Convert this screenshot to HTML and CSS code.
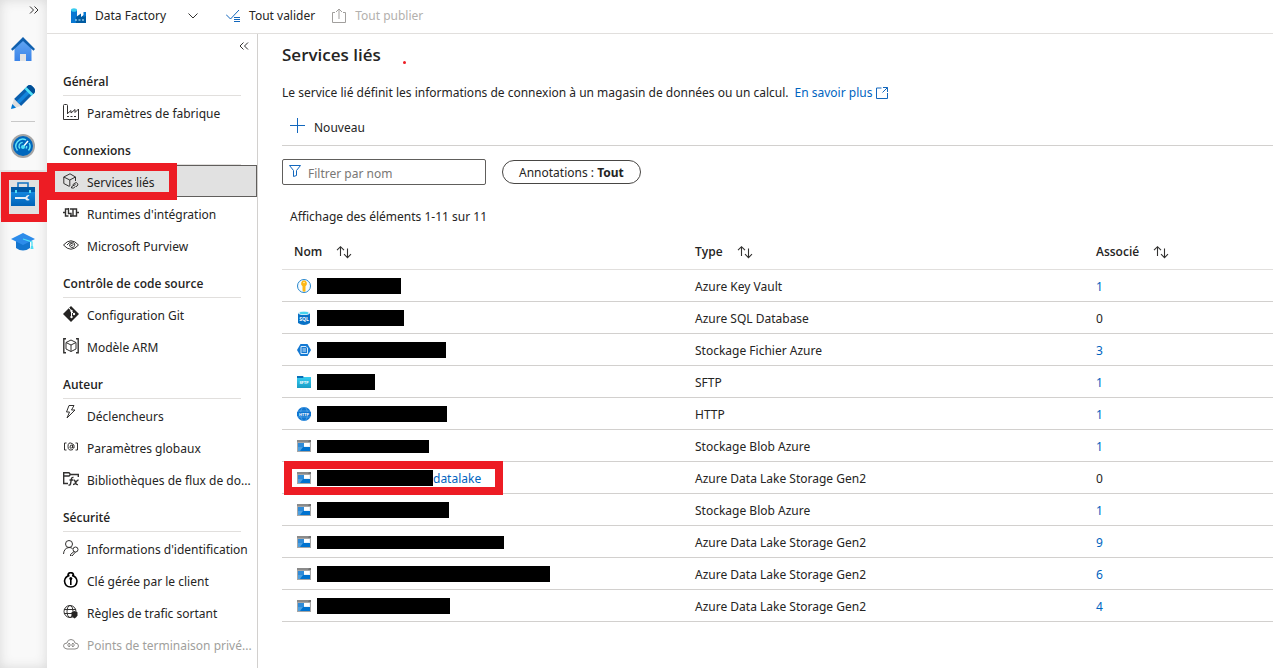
FILE: index.html
```html
<!DOCTYPE html>
<html lang="fr">
<head>
<meta charset="utf-8">
<meta name="viewport" content="width=device-width, initial-scale=1">
<title>Data Factory - Services liés</title>
<link rel="stylesheet" href="styles.css">
</head>
<body>
<svg class="sprite" aria-hidden="true">
  <defs>
    <linearGradient id="blue" x1="0" y1="0" x2="0" y2="1"><stop offset="0" stop-color="#1a93ea"/><stop offset="1" stop-color="#0063b8"/></linearGradient>
    <linearGradient id="sky" x1="0" y1="0" x2="0" y2="1"><stop offset="0" stop-color="#62a6f2"/><stop offset="1" stop-color="#3a83e8"/></linearGradient>
    <linearGradient id="folder" x1="0" y1="0" x2="0" y2="1"><stop offset="0" stop-color="#35cdf2"/><stop offset="1" stop-color="#1a9cc4"/></linearGradient>
  </defs>
  <symbol id="storage" viewBox="0 0 14 12">
    <path fill="#a6a6a6" d="M0 0h14v12H0z"/><path fill="#8a8a8a" d="M0 0h14v2H0z"/><path fill="#737373" d="M12 0h2v2h-3z"/>
    <path fill="#e8f1fa" d="M1 3h12v8H1z"/><path fill="#2f8bd8" d="M1 3h6v4H1z"/><path fill="#0072cf" d="M1 7h12v4H1z"/>
    <path fill="#fff" d="M7 3h5v3H7z"/><path fill="#4da0e0" d="M1 7h5L3 11H1z"/>
  </symbol>
  <symbol id="sort" viewBox="0 0 16 14">
    <path fill="none" stroke="#323130" stroke-width="1.1" d="M4.500 11V2M1 5.200 4.500 1.700 8 5.200M11.500 3.500v9M8 9.200l3.500 3.500L15 9.200"/>
  </symbol>
</svg>
<div class="app">
  <nav class="rail" aria-label="Navigation principale">
    <button class="rail-toggle" aria-label="Développer"><svg width="10" height="8" viewBox="0 0 10 8"><path class="line" d="m1 .5 3.500 3.500L1 7.500M5.500.5 9 4 5.500 7.500"/></svg></button>
    <a class="rail-item" href="#" aria-label="Accueil"><svg width="24" height="24" viewBox="0 0 24 24"><path fill="url(#sky)" d="M3.500 11 12 3l8.500 8v13H15v-7H9v7H3.500z"/><path fill="#e3e3e3" d="M9 17h6v7H9z"/><path fill="#0f5fae" d="M12 0 24 12l-1.500 1.800L12 4 1.500 13.800 0 12z"/></svg></a>
    <a class="rail-item" href="#" aria-label="Auteur"><svg width="24" height="24" viewBox="0 0 24 24"><path fill="#0a5fae" d="M3 14 16 1.500q2.500-2.500 5-.5l2 2q2 2.500 0 5L10 21z"/><path fill="#1283dc" d="M5.500 16.500 17 5l2.500 2.500L8 19z"/><path fill="#50e0f5" d="m13.500 4 2-2 7 7-2 2z"/><path fill="#004f96" d="m15.500 2 1-1q2.500-2 4.500 0l2 2q2 2.500.5 5l-1 1z"/><path fill="#dedede" d="m3 14 7 7-8 2.500L.500 22z"/><path fill="#0078d4" d="M1.300 19 5 22.700 0 24z"/></svg></a>
    <div class="rail-rule"></div>
    <a class="rail-item" href="#" aria-label="Surveiller"><svg width="24" height="24" viewBox="0 0 24 24"><circle cx="12" cy="12" r="12" fill="#a5a5a5"/><circle cx="12" cy="12" r="10" fill="#0067bd"/><g fill="none" stroke="#62e3f7" stroke-width="1.400"><path d="M6.500 16.500a7 7 0 0 1 8.500-10.700M18.200 9a7 7 0 0 1-.7 7.500M8.900 14.500a3.700 3.700 0 0 1 2.800-6.100M15.600 12a3.700 3.700 0 0 1-.5 2.500"/><path stroke="#fff" d="m12 13 5-6"/></g><circle cx="12" cy="13" r="2" fill="#50dff5"/></svg></a>
    <a class="rail-item selected marked" href="#" aria-label="Gérer" aria-current="page"><svg width="24" height="24" viewBox="0 0 24 24"><path fill="none" stroke="#1272c2" stroke-width="1.600" d="M7 5V1h10v4"/><path fill="url(#blue)" d="M0 5h24v19H0z"/><path fill="#0058a6" d="M0 5h24v5H0z"/><path fill="#50dff5" d="M4 8h2v3H4zM18 8h2v3h-2z"/><path fill="#e6eef5" d="M4 15h10.500q1-2 3-2l1 .2-2 2v1l2.300 1.800-1.800.6q-2 0-2.800-1.600H4z"/></svg></a>
    <a class="rail-item" href="#" aria-label="Formation"><svg width="24" height="20" viewBox="0 0 24 20"><path fill="#1476cf" d="M5 8h14v8q-7 5-14 0z"/><path fill="#2d8cea" d="M12 1 24 7l-12 6L0 7z"/><path fill="none" stroke="#50dff5" stroke-width="1.300" d="m12 7 9 3v5"/><path fill="#50dff5" d="M20 14h2l.5 3h-3z"/></svg></a>
  </nav>
  <div class="workspace">
    <header class="topbar">
      <button class="command factory"><svg width="16" height="15" viewBox="0 0 16 15"><path fill="#0878d2" d="M0 2h6v13H0z"/><path fill="#005ba1" d="M5 9 10 5.500V9l5-3.500V15H5z"/><path fill="#0878d2" d="M12.500 4H15v4l-2.500 1z"/><ellipse cx="3" cy="2" rx="3" ry="1.800" fill="#38cbee"/><path fill="#c8efff" d="M4 11.500h2v1H4zM7.500 11.500h2v1h-2zM11 11.500h2v1h-2z"/></svg><span>Data Factory</span><svg class="caret" width="10" height="6" viewBox="0 0 10 6"><path class="line" d="m.5.5 4.500 4.500L9.500.5"/></svg></button>
      <button class="command"><svg width="15" height="14" viewBox="0 0 15 14"><path class="line blue" d="m0 5.500 4.500 4.500L13 1M8 8.500h6M8 10.500h6M8 12.500h6"/></svg><span>Tout valider</span></button>
      <button class="command" disabled><svg width="16" height="16" viewBox="0 0 16 16"><path class="line" d="M4 4.500H1.500v10h13v-10H12M8 11V1M5 4l3-3 3 3"/></svg><span>Tout publier</span></button>
    </header>
    <div class="body">
      <nav class="sidebar" aria-label="Gérer">
        <button class="collapse" aria-label="Réduire"><svg width="10" height="8" viewBox="0 0 10 8"><path class="line" d="M4.500.5 1 4l3.500 3.500M9 .5 5.500 4 9 7.500"/></svg></button>
        <h2 class="group">Général</h2>
        <a class="link" href="#"><svg width="16" height="16" viewBox="0 0 16 16"><path class="line" d="M4.500 10V1.500q0-1-1-1h-2q-1 0-1 1v14h15V5l-3.500 3.500V5.500L8 9V6.500l-3.500 3"/><path fill="#323130" d="M4 12h2v1H4zM7.500 12h2v1h-2zM11 12h2v1h-2z"/></svg><span>Paramètres de fabrique</span></a>
        <h2 class="group">Connexions</h2>
        <a class="link active marked" href="#" aria-current="page"><svg width="16" height="16" viewBox="0 0 16 16"><path class="line" d="M6.500 13.500.800 10.500V4L7 .800 12.500 4v4M.8 4l6 3 5.700-3M6.800 7v6"/><path class="line" d="m9.500 12 2.500-2q1.500-1 2.500.5t-.5 2.500l-1 .700M12.500 11.500l-3 1.500q-1.500 1-1 2h2l2-1.500"/></svg><span>Services liés</span></a>
        <a class="link" href="#"><svg width="16" height="10" viewBox="0 0 16 10"><path class="line heavy" d="M0 4.500h2.500M5.500 1h-3v7h3M5.500 0v5.500H8V9M7 1h3v7H7M10.500 1h3v7h-3M13.500 4.500H16"/></svg><span>Runtimes d'intégration</span></a>
        <a class="link" href="#"><svg width="16" height="10" viewBox="0 0 16 10"><path class="line" d="M.5 5Q8-3.500 15.500 5 8 13.500.500 5z"/><path class="line" d="M4 5q4-5 7.500-1.500 1 4-3 4-3-1-1.500-3.500 3-1.500 3 .500-1 2-2 1"/></svg><span>Microsoft Purview</span></a>
        <h2 class="group">Contrôle de code source</h2>
        <a class="link" href="#"><svg width="16" height="16" viewBox="0 0 16 16"><path fill="#252423" d="m8 0 8 8-8 8-8-8z"/><path fill="none" stroke="#fff" d="m6 2 2.500 3v6M8.500 5.500 11 8"/><g fill="#fff"><circle cx="8.500" cy="5" r="1.200"/><circle cx="8.500" cy="11" r="1.200"/><circle cx="11" cy="8" r="1.200"/></g></svg><span>Configuration Git</span></a>
        <a class="link" href="#"><svg width="16" height="16" viewBox="0 0 16 16"><path class="line heavy" d="M3 .800H.800v14H3M13 .800h2.200v14H13"/><path class="line" d="m8 2 5 2.500v6.500L8 13.500 3 11V4.500zM3 4.500 8 7l5-2.500M8 7v6.500"/></svg><span>Modèle ARM</span></a>
        <h2 class="group">Auteur</h2>
        <a class="link" href="#"><svg class="raised" width="16" height="14" viewBox="0 0 16 14"><path class="line" d="M6 .500h5L8.500 5H12L4 13l2.500-6H3.500z"/></svg><span>Déclencheurs</span></a>
        <a class="link" href="#"><svg width="16" height="10" viewBox="0 0 16 10"><path class="line" d="M3.500 1H1.500v7h2M12.500 1h2v7h-2M10 7.500q-5 2-5-3t4-3q3 1 2 4.500H9.500V3Q7 2.500 7 5t2.500 0"/></svg><span>Paramètres globaux</span></a>
        <a class="link" href="#"><svg width="16" height="14" viewBox="0 0 16 14"><path class="line heavy" d="M5 11.500H.700V.800H6L7.500 2.500h7.800V5M.7 4H6l1.500-1.500"/><path class="line heavy" d="M10.500 5.500q-2-.5-2.200 2L7.500 12q-.5 1.500-2 1M6.500 8h3.500M10.500 8q1.500 0 2 2.500t2.500 2M15.500 8q-1.500 0-2.500 2.200T10 12.500"/></svg><span>Bibliothèques de flux de do...</span></a>
        <h2 class="group">Sécurité</h2>
        <a class="link" href="#"><svg width="16" height="16" viewBox="0 0 16 16"><circle class="line" cx="6" cy="4" r="3.500"/><path class="line" d="M.5 14q.5-6 5.500-6.500 2 0 3.500 1"/><circle class="line" cx="12.500" cy="9.500" r="2.500"/><path class="line" d="m11 11.500-3.500 3V16H9l3.500-4"/></svg><span>Informations d'identification</span></a>
        <a class="link" href="#"><svg width="16" height="16" viewBox="0 0 16 16"><path class="line strong" d="M5 4V3.500a2.700 2.700 0 0 1 5.500 0V4M6.500 3.500Q2 4.500 1.500 9q.5 6 6.300 6T14 9q-.5-4.500-5-5.500"/><circle cx="7.800" cy="6.500" r="1.500"/><path class="line strong" d="M7.800 7v6"/></svg><span>Clé gérée par le client</span></a>
        <a class="link" href="#"><svg width="16" height="14" viewBox="0 0 16 14"><g class="line"><circle cx="7" cy="6.500" r="6"/><ellipse cx="7" cy="6.500" rx="3" ry="6"/><path d="M1 4.500h12M1 8.500h9"/></g><path fill="#252423" d="m11.500 6 3 1.200v3q-.5 2-3 3.300-2.500-1.300-3-3.300v-3z"/></svg><span>Règles de trafic sortant</span></a>
        <a class="link disabled" aria-disabled="true"><svg width="16" height="11" viewBox="0 0 16 11"><path class="line" d="M4 10Q.5 9.500.5 6.800T4 4q.5-3.500 4-3.500T12 4q3.500 0 3.500 3T12 10z"/><path class="line" d="M7 4.500H5.500q-1.500 1.500 0 3H7M9 4.500h1.500q1.500 1.500 0 3H9M6 6h4"/></svg><span>Points de terminaison privé...</span></a>
      </nav>
      <main class="main">
        <h1 class="title">Services liés <span class="dot"></span></h1>
        <p class="intro">Le service lié définit les informations de connexion à un magasin de données ou un calcul. <a href="#" class="more">En savoir plus<svg width="12" height="12" viewBox="0 0 12 12"><path class="line blue" d="M5.500 1H.500v10.500h11V6M7 .500h4.500V5M11.500.500 6.500 5.500"/></svg></a></p>
        <div class="toolbar"><button class="new"><svg width="15" height="15" viewBox="0 0 15 15"><path class="line blue" d="M7.500 0v15M0 7.500h15"/></svg><span>Nouveau</span></button></div>
        <div class="filters">
          <label class="search"><svg width="12" height="12" viewBox="0 0 12 12"><path class="line blue" d="M.5.500h11L7.500 5.500v5l-3 1v-6z"/></svg><input type="text" aria-label="Filtrer par nom" placeholder="Filtrer par nom"></label>
          <button class="pill">Annotations : <b>Tout</b></button>
        </div>
        <p class="count">Affichage des éléments 1-11 sur 11</p>
        <table class="services">
          <thead><tr>
            <th scope="col"><button class="sort">Nom<svg width="16" height="14"><use href="#sort"/></svg></button></th>
            <th scope="col"><button class="sort">Type<svg width="16" height="14"><use href="#sort"/></svg></button></th>
            <th scope="col"><button class="sort">Associé<svg width="16" height="14"><use href="#sort"/></svg></button></th>
          </tr></thead>
          <tbody>
            <tr><td><div class="name"><svg width="14" height="14" viewBox="0 0 14 14"><circle cx="7" cy="7" r="6.500" fill="#f4fbff" stroke="#2786cc"/><path fill="#fdb714" d="M7 1.200a3.300 3.300 0 0 1 1.500 6V12L7 13l-1.500-1.500V7.200A3.300 3.300 0 0 1 7 1.200z"/><circle cx="7" cy="3.500" r=".8" fill="#fff4bd"/></svg><span class="mask" style="width:84px"></span></div></td><td>Azure Key Vault</td><td><a href="#">1</a></td></tr>
            <tr><td><div class="name"><svg width="14" height="14" viewBox="0 0 14 14"><path fill="#0871c6" d="M1 2h12v10q-6 4-12 0z"/><ellipse cx="7" cy="2" rx="6" ry="2" fill="#e3f5fb"/><ellipse cx="7" cy="2" rx="4.500" ry="1.300" fill="#45d4ee"/><text x="7" y="10" class="badge">SQL</text></svg><span class="mask" style="width:87px"></span></div></td><td>Azure SQL Database</td><td>0</td></tr>
            <tr><td><div class="name"><svg width="14" height="14" viewBox="0 0 14 14"><path fill="#1479d3" d="M3.500 1h7L14 7l-3.500 6h-7L0 7z"/><path fill="none" stroke="#d4eafa" d="M4 3.500h5L10.500 5v5.500H4zM5.500 6h3.500M5.500 8H9"/></svg><span class="mask" style="width:129px"></span></div></td><td>Stockage Fichier Azure</td><td><a href="#">3</a></td></tr>
            <tr><td><div class="name"><svg width="14" height="12" viewBox="0 0 14 12"><path fill="#0870b8" d="M0 0h6l1 1.500V3H0z"/><path fill="url(#folder)" d="M0 2h6l1-1h7v11H0z"/><text x="7" y="8" class="badge small">SFTP</text></svg><span class="mask" style="width:58px"></span></div></td><td>SFTP</td><td><a href="#">1</a></td></tr>
            <tr><td><div class="name"><svg width="14" height="14" viewBox="0 0 14 14"><circle cx="7" cy="7" r="7" fill="#0f75d1"/><g fill="none" stroke="#69b2ee" stroke-width=".6"><ellipse cx="7" cy="7" rx="3.500" ry="7"/><path d="M1 4h12M1 10h12"/></g><path fill="#0f75d1" d="M0 5h14v4H0z"/><text x="7" y="8.500" class="badge small">HTTP</text></svg><span class="mask" style="width:130px"></span></div></td><td>HTTP</td><td><a href="#">1</a></td></tr>
            <tr><td><div class="name"><svg width="14" height="12"><use href="#storage"/></svg><span class="mask thin" style="width:112px"></span></div></td><td>Stockage Blob Azure</td><td><a href="#">1</a></td></tr>
            <tr><td><div class="name marked"><svg width="14" height="12"><use href="#storage"/></svg><span class="mask" style="width:116px"></span><a href="#">datalake</a></div></td><td>Azure Data Lake Storage Gen2</td><td>0</td></tr>
            <tr><td><div class="name"><svg width="14" height="12"><use href="#storage"/></svg><span class="mask" style="width:132px"></span></div></td><td>Stockage Blob Azure</td><td><a href="#">1</a></td></tr>
            <tr><td><div class="name"><svg width="14" height="12"><use href="#storage"/></svg><span class="mask thin" style="width:187px"></span></div></td><td>Azure Data Lake Storage Gen2</td><td><a href="#">9</a></td></tr>
            <tr><td><div class="name"><svg width="14" height="12"><use href="#storage"/></svg><span class="mask" style="width:233px"></span></div></td><td>Azure Data Lake Storage Gen2</td><td><a href="#">6</a></td></tr>
            <tr><td><div class="name"><svg width="14" height="12"><use href="#storage"/></svg><span class="mask" style="width:133px"></span></div></td><td>Azure Data Lake Storage Gen2</td><td><a href="#">4</a></td></tr>
          </tbody>
        </table>
      </main>
    </div>
  </div>
</div>
</body>
</html>
```
FILE: styles.css
```css
*, *::after { box-sizing: border-box; }
body { margin: 0; background: #fff; color: #252423; font: 12px/16px "Noto Sans", "Open Sans", sans-serif; overflow: hidden; }
button, input { font: inherit; color: inherit; }
button { display: flex; align-items: center; padding: 0; border: 0; background: none; }
a { color: #0064bf; text-decoration: none; }
svg { display: block; flex: none; }
h1, h2, p { margin: 0; }
.sprite { position: absolute; width: 0; height: 0; }
.line { fill: none; stroke: #323130; stroke-width: 1; }
.line.heavy { stroke-width: 1.4; }
.line.strong { stroke: #000; stroke-width: 1.6; }
.line.blue { stroke: #1267bd; }

.app { display: flex; min-height: 100vh; }
.workspace { flex: 1; min-width: 0; display: flex; flex-direction: column; }
.body { flex: 1; display: flex; }

.rail { flex: 0 0 47px; background: #f9f9f9; box-shadow: inset 0 0 12px #d8d8d8; }
.rail-toggle { width: 100%; height: 25px; padding: 0 8px 6px; justify-content: flex-end; }
.rail-item { position: relative; display: flex; align-items: center; height: 48px; padding-left: 11px; }
.rail-item.selected { background: #e1e1e1; }
.rail-rule { height: 1px; margin: 0 12px 0 11px; background: #c8c8c8; }

/* Red highlight frames */
.marked { position: relative; }
.marked::after { content: ""; position: absolute; border: 8px solid #ed1c24; pointer-events: none; z-index: 1; }
.rail-item.marked::after { inset: 2px 0 -4px 1px; }
.link.marked::after { top: -3px; bottom: -4px; left: -1px; width: 130px; }
.name.marked::after { inset: -8px auto -8px -13px; width: 219px; }

.topbar { display: flex; align-items: center; height: 34px; padding: 0 24px 2px; border-bottom: 1px solid #e1dfdd; }
.command { gap: 8px; white-space: nowrap; }
.command + .command { margin-left: 16px; }
.factory + .command { margin-left: 28px; }
.caret { margin-left: 14px; }
.command:disabled { color: #b3b0ad; }
.command:disabled .line { stroke: #a19f9d; }

.sidebar { flex: 0 0 211px; border-right: 1px solid #d2d0ce; }
.collapse { width: 100%; height: 25px; padding: 0 8px 2px; justify-content: flex-end; }
.group { height: 37px; margin: 0 16px; padding-top: 15px; border-bottom: 1px solid #e1dfdd; font: 600 12px/16px "Open Sans", "Noto Sans", sans-serif; white-space: nowrap; }
.link { display: flex; align-items: center; gap: 8px; height: 32px; padding: 0 0 0 16px; color: #252423; white-space: nowrap; }
.link span { padding-top: 3px; }
.link.active { background: #e1e1e1; border: 1px solid #605e5c; padding-left: 15px; }
.link.disabled { color: #a19f9d; }
.link.disabled .line { stroke: #8a8886; }
.raised { margin-bottom: 6px; }

.main { flex: 1; min-width: 0; padding: 9px 0 0 24px; }
.title { display: flex; align-items: center; gap: 22px; font: 600 17px/24px "Open Sans", "Noto Sans", sans-serif; white-space: nowrap; }
.dot { width: 3px; height: 3px; margin-top: 14px; border-radius: 50%; background: #ed1c24; }
.intro { display: flex; align-items: center; gap: 6px; margin-top: 18px; white-space: nowrap; }
.more { display: flex; align-items: center; gap: 4px; }
.toolbar { display: flex; height: 45px; padding: 10px 8px 0; border-bottom: 1px solid #d2d0ce; }
.new { height: 32px; gap: 9px; }
.new svg { margin-bottom: 3px; }
.new span { padding-top: 2px; }
.filters { display: flex; align-items: center; gap: 16px; margin-top: 13px; }
.search { display: flex; align-items: center; gap: 7px; width: 204px; height: 26px; padding: 0 6px; border: 1px solid #605e5c; border-radius: 2px; }
.search svg { margin-bottom: 2px; }
.search input { flex: 1; min-width: 0; padding: 3px 0 0; border: 0; outline: 0; background: none; }
.search input::placeholder { color: #797775; opacity: 1; }
.pill { height: 24px; padding: 1px 16px 0; border: 1px solid #484644; border-radius: 12px; white-space: pre; }
.count { margin: 24px 8px 0; }

.services { width: 100%; margin-top: 7px; border-collapse: collapse; table-layout: fixed; }
.services th { width: 401px; height: 37px; padding: 3px 12px 0; border-bottom: 1px solid #e1dfdd; text-align: left; }
.services th:last-child { width: auto; }
.services td { height: 32px; padding: 4px 12px 0; border-bottom: 1px solid #d2d0ce; white-space: nowrap; }
.services td:first-child { padding-top: 2px; }
.sort { gap: 14px; font: 600 12px/16px "Open Sans", "Noto Sans", sans-serif; }
.name { display: flex; align-items: center; margin-left: 3px; width: max-content; }
.name svg { margin-right: 6px; }
.name a { padding-top: 2px; }
.mask { height: 16px; background: #000; }
.mask.thin { height: 13px; }
.badge { fill: #fff; font: 700 5px "Open Sans", sans-serif; text-anchor: middle; }
.badge.small { font-size: 4px; }
```
